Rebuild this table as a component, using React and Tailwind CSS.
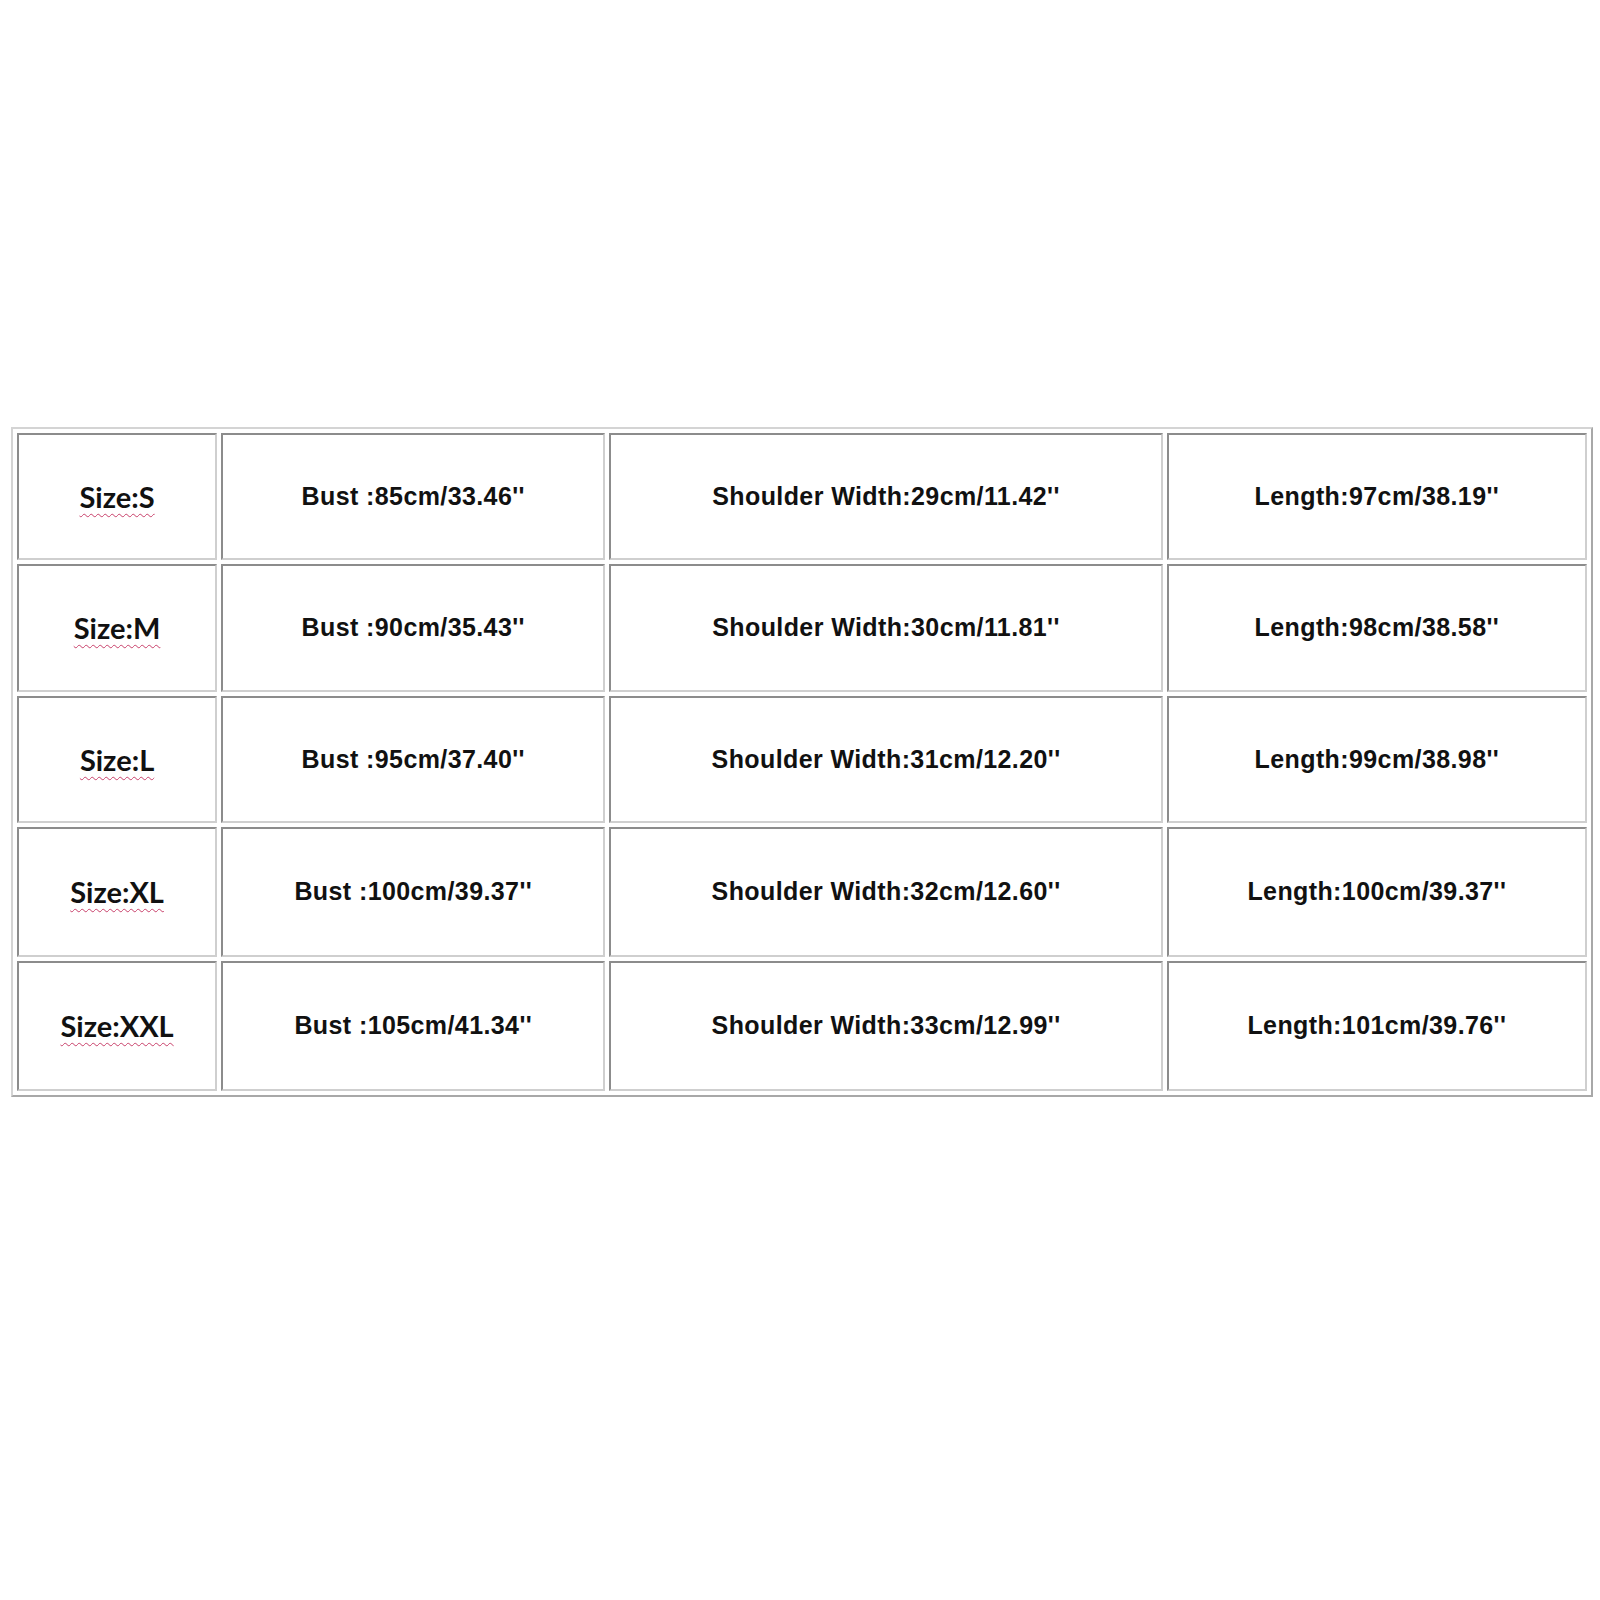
import React from "react";

const rows = [
  { size: "Size:S", bust: "Bust :85cm/33.46''", sh: "Shoulder Width:29cm/11.42''", len: "Length:97cm/38.19''", h: "h-[127px]" },
  { size: "Size:M", bust: "Bust :90cm/35.43''", sh: "Shoulder Width:30cm/11.81''", len: "Length:98cm/38.58''", h: "h-[128px]" },
  { size: "Size:L", bust: "Bust :95cm/37.40''", sh: "Shoulder Width:31cm/12.20''", len: "Length:99cm/38.98''", h: "h-[127px]" },
  { size: "Size:XL", bust: "Bust :100cm/39.37''", sh: "Shoulder Width:32cm/12.60''", len: "Length:100cm/39.37''", h: "h-[130px]" },
  { size: "Size:XXL", bust: "Bust :105cm/41.34''", sh: "Shoulder Width:33cm/12.99''", len: "Length:101cm/39.76''", h: "h-[130px]" },
];

const cell =
  "border-2 border-t-[#8c8c8c] border-l-[#8c8c8c] border-r-[#cfcfcf] border-b-[#cfcfcf] text-center align-middle p-0";

const txt =
  "font-['Liberation_Sans',Arial,sans-serif] font-bold text-[25px] tracking-[0.4px] text-[#111]";

export default function App() {
  return (
    <div className="w-[1600px] h-[1600px] bg-white pt-[427px] pl-[11px]">
      <table className="border-separate border-spacing-x-[4px] border-spacing-y-[4px] border-2 border-t-[#d4d4d4] border-l-[#d4d4d4] border-r-[#a8a8a8] border-b-[#a8a8a8] w-[1582px] table-fixed">
        <colgroup>
          <col className="w-[200px]" />
          <col className="w-[384px]" />
          <col className="w-[553px]" />
          <col className="w-[420px]" />
        </colgroup>
        <tbody>
          {rows.map((r) => (
            <tr key={r.size} className={r.h}>
              <td className={cell}>
                <span className="font-['Lato','Open_Sans',sans-serif] font-bold text-[29px] text-[#111] underline decoration-wavy decoration-[#c8406a] decoration-1 underline-offset-[5px]">
                  {r.size}
                </span>
              </td>
              <td className={cell}>
                <span className={txt}>{r.bust}</span>
              </td>
              <td className={cell}>
                <span className={txt}>{r.sh}</span>
              </td>
              <td className={cell}>
                <span className={txt}>{r.len}</span>
              </td>
            </tr>
          ))}
        </tbody>
      </table>
    </div>
  );
}
